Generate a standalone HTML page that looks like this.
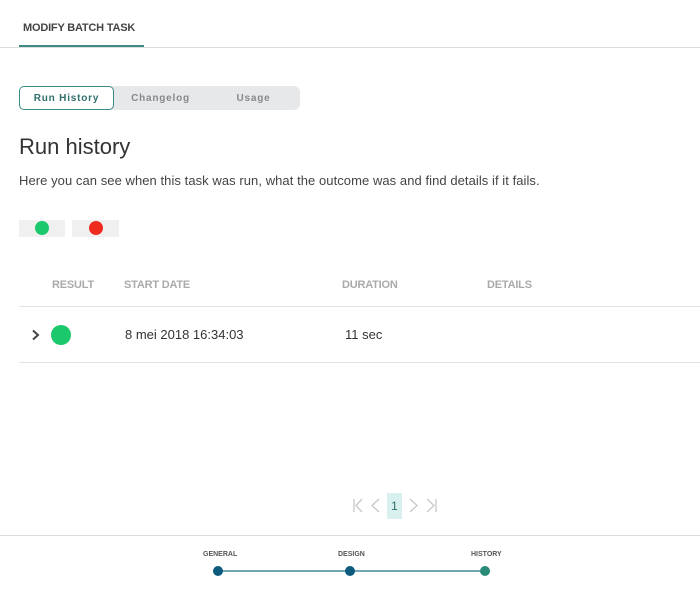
<!DOCTYPE html>
<html><head><style>
*{margin:0;padding:0;box-sizing:border-box}
body{width:700px;height:595px;background:#fff;font-family:"Liberation Sans",sans-serif;position:relative;overflow:hidden;color:#333}
.a{position:absolute}
</style></head><body>
<div class="a" style="left:23px;top:22px;font-size:11px;font-weight:bold;color:#444;letter-spacing:-0.2px">MODIFY BATCH TASK</div>
<div class="a" style="left:19px;top:45px;width:125px;height:2px;background:#3c8a86"></div>
<div class="a" style="left:0;top:47px;width:700px;height:1px;background:#ddd"></div>

<div class="a" style="left:19px;top:86px;width:281px;height:24px;background:#e6e8ea;border-radius:6px"></div>
<div class="a" style="left:19px;top:86px;width:95px;height:24px;border:1px solid #3c8a86;border-radius:5px;background:#fff;font-size:10px;font-weight:bold;color:#2f6f6c;letter-spacing:.8px;text-align:center;line-height:23px">Run History</div>
<div class="a" style="left:114px;top:87px;width:93px;height:24px;font-size:10px;font-weight:bold;color:#888;letter-spacing:.8px;text-align:center;line-height:24px">Changelog</div>
<div class="a" style="left:207px;top:87px;width:93px;height:24px;font-size:10px;font-weight:bold;color:#888;letter-spacing:.8px;text-align:center;line-height:24px">Usage</div>

<div class="a" style="left:19px;top:134px;font-size:22px;color:#333">Run history</div>
<div class="a" style="left:19px;top:173px;font-size:13px;letter-spacing:0.06px;color:#444">Here you can see when this task was run, what the outcome was and find details if it fails.</div>

<div class="a" style="left:19px;top:220px;width:46px;height:17px;background:#f0f0f0"></div>
<div class="a" style="left:35px;top:221px;width:14px;height:14px;border-radius:50%;background:#1cc86c"></div>
<div class="a" style="left:72px;top:220px;width:47px;height:17px;background:#f0f0f0"></div>
<div class="a" style="left:89px;top:221px;width:14px;height:14px;border-radius:50%;background:#ee2b1e"></div>

<div class="a" style="left:52px;top:279px;font-size:11px;font-weight:bold;color:#aaa;letter-spacing:-0.2px">RESULT</div>
<div class="a" style="left:124px;top:279px;font-size:11px;font-weight:bold;color:#aaa;letter-spacing:-0.2px">START DATE</div>
<div class="a" style="left:342px;top:279px;font-size:11px;font-weight:bold;color:#aaa;letter-spacing:-0.2px">DURATION</div>
<div class="a" style="left:487px;top:279px;font-size:11px;font-weight:bold;color:#aaa;letter-spacing:-0.2px">DETAILS</div>
<div class="a" style="left:19px;top:306px;width:681px;height:1px;background:#e3e3e3"></div>
<svg class="a" style="left:30px;top:329px" width="12" height="12"><path d="M3 1.5 L8 6 L3 10.5" stroke="#444" stroke-width="2" fill="none"/></svg>
<div class="a" style="left:51px;top:325px;width:20px;height:20px;border-radius:50%;background:#1cc86c"></div>
<div class="a" style="left:125px;top:327px;font-size:13px;color:#333">8 mei 2018 16:34:03</div>
<div class="a" style="left:345px;top:327px;font-size:13px;color:#333">11 sec</div>
<div class="a" style="left:19px;top:362px;width:681px;height:1px;background:#e3e3e3"></div>

<svg class="a" style="left:350px;top:497px" width="90" height="18" stroke="#c8c8c8" stroke-width="1.3" fill="none">
<path d="M4 2 V15 M12 2 L6 8.5 L12 15"/>
<path d="M29 2 L22 8.5 L29 15"/>
<path d="M60 2 L67 8.5 L60 15"/>
<path d="M77 2 L84 8.5 L77 15 M86 2 V15"/>
</svg>
<div class="a" style="left:387px;top:493px;width:15px;height:26px;background:#d8f1ee;font-size:12px;color:#2f6f6c;text-align:center;line-height:26px">1</div>
<div class="a" style="left:0;top:535px;width:700px;height:1px;background:#ddd"></div>

<div class="a" style="left:203px;top:551px;font-size:7px;font-weight:bold;color:#555">GENERAL</div>
<div class="a" style="left:338px;top:551px;font-size:7px;font-weight:bold;color:#555">DESIGN</div>
<div class="a" style="left:471px;top:551px;font-size:7px;font-weight:bold;color:#555">HISTORY</div>
<div class="a" style="left:218px;top:570px;width:267px;height:2px;background:#6fa8b4"></div>
<div class="a" style="left:213px;top:566px;width:10px;height:10px;border-radius:50%;background:#0d5b7c"></div>
<div class="a" style="left:345px;top:566px;width:10px;height:10px;border-radius:50%;background:#0d5b7c"></div>
<div class="a" style="left:480px;top:566px;width:10px;height:10px;border-radius:50%;background:#2a8a78"></div>
</body></html>
